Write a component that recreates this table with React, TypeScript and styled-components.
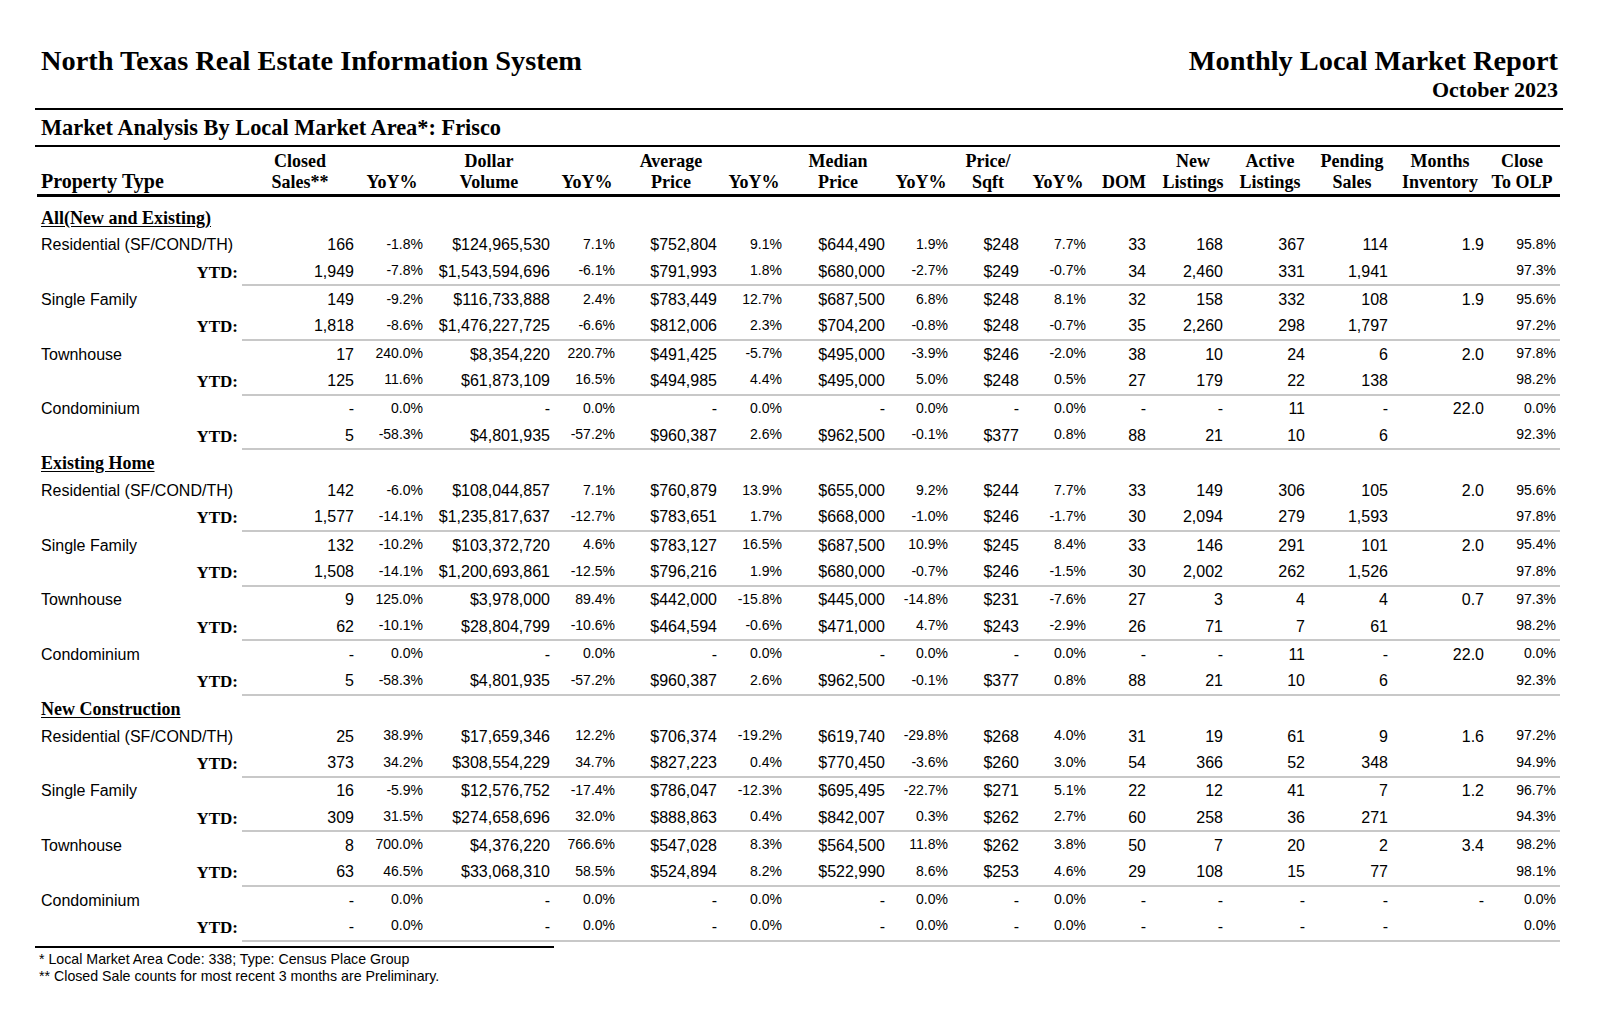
import React from 'react';
import styled, { createGlobalStyle } from 'styled-components';

const SERIF = `"Liberation Serif", "Times New Roman", serif`;
const SANS = `"Liberation Sans", Arial, sans-serif`;

const GlobalStyle = createGlobalStyle`
  html, body { margin: 0; padding: 0; background: #ffffff; }
  body { font-family: ${SANS}; color: #000; }
`;

type Col = { w: number; pad: number; small?: boolean };

const COLS: Col[] = [
  { w: 205, pad: 4 },
  { w: 116, pad: 4 },
  { w: 68, pad: 3, small: true },
  { w: 126, pad: 2 },
  { w: 70, pad: 7, small: true },
  { w: 98, pad: 3 },
  { w: 68, pad: 6, small: true },
  { w: 100, pad: 3 },
  { w: 66, pad: 6, small: true },
  { w: 68, pad: 3 },
  { w: 72, pad: 8, small: true },
  { w: 60, pad: 8 },
  { w: 78, pad: 9 },
  { w: 76, pad: 3 },
  { w: 88, pad: 8 },
  { w: 88, pad: 0 },
  { w: 76, pad: 4, small: true },
];

const TEMPLATE = COLS.map((c) => `${c.w}px`).join(' ');

const HEADERS: string[][] = [
  ['Property Type'],
  ['Closed', 'Sales**'],
  ['YoY%'],
  ['Dollar', 'Volume'],
  ['YoY%'],
  ['Average', 'Price'],
  ['YoY%'],
  ['Median', 'Price'],
  ['YoY%'],
  ['Price/', 'Sqft'],
  ['YoY%'],
  ['DOM'],
  ['New', 'Listings'],
  ['Active', 'Listings'],
  ['Pending', 'Sales'],
  ['Months', 'Inventory'],
  ['Close', 'To OLP'],
];

type Pair = { name: string; main: string[]; ytd: string[] };
type Section = { title: string; pairs: Pair[] };

const SECTIONS: Section[] = [
  {
    title: 'All(New and Existing)',
    pairs: [
      {
        name: 'Residential (SF/COND/TH)',
        main: ['166', '-1.8%', '$124,965,530', '7.1%', '$752,804', '9.1%', '$644,490', '1.9%', '$248', '7.7%', '33', '168', '367', '114', '1.9', '95.8%'],
        ytd: ['1,949', '-7.8%', '$1,543,594,696', '-6.1%', '$791,993', '1.8%', '$680,000', '-2.7%', '$249', '-0.7%', '34', '2,460', '331', '1,941', '', '97.3%'],
      },
      {
        name: 'Single Family',
        main: ['149', '-9.2%', '$116,733,888', '2.4%', '$783,449', '12.7%', '$687,500', '6.8%', '$248', '8.1%', '32', '158', '332', '108', '1.9', '95.6%'],
        ytd: ['1,818', '-8.6%', '$1,476,227,725', '-6.6%', '$812,006', '2.3%', '$704,200', '-0.8%', '$248', '-0.7%', '35', '2,260', '298', '1,797', '', '97.2%'],
      },
      {
        name: 'Townhouse',
        main: ['17', '240.0%', '$8,354,220', '220.7%', '$491,425', '-5.7%', '$495,000', '-3.9%', '$246', '-2.0%', '38', '10', '24', '6', '2.0', '97.8%'],
        ytd: ['125', '11.6%', '$61,873,109', '16.5%', '$494,985', '4.4%', '$495,000', '5.0%', '$248', '0.5%', '27', '179', '22', '138', '', '98.2%'],
      },
      {
        name: 'Condominium',
        main: ['-', '0.0%', '-', '0.0%', '-', '0.0%', '-', '0.0%', '-', '0.0%', '-', '-', '11', '-', '22.0', '0.0%'],
        ytd: ['5', '-58.3%', '$4,801,935', '-57.2%', '$960,387', '2.6%', '$962,500', '-0.1%', '$377', '0.8%', '88', '21', '10', '6', '', '92.3%'],
      },
    ],
  },
  {
    title: 'Existing Home',
    pairs: [
      {
        name: 'Residential (SF/COND/TH)',
        main: ['142', '-6.0%', '$108,044,857', '7.1%', '$760,879', '13.9%', '$655,000', '9.2%', '$244', '7.7%', '33', '149', '306', '105', '2.0', '95.6%'],
        ytd: ['1,577', '-14.1%', '$1,235,817,637', '-12.7%', '$783,651', '1.7%', '$668,000', '-1.0%', '$246', '-1.7%', '30', '2,094', '279', '1,593', '', '97.8%'],
      },
      {
        name: 'Single Family',
        main: ['132', '-10.2%', '$103,372,720', '4.6%', '$783,127', '16.5%', '$687,500', '10.9%', '$245', '8.4%', '33', '146', '291', '101', '2.0', '95.4%'],
        ytd: ['1,508', '-14.1%', '$1,200,693,861', '-12.5%', '$796,216', '1.9%', '$680,000', '-0.7%', '$246', '-1.5%', '30', '2,002', '262', '1,526', '', '97.8%'],
      },
      {
        name: 'Townhouse',
        main: ['9', '125.0%', '$3,978,000', '89.4%', '$442,000', '-15.8%', '$445,000', '-14.8%', '$231', '-7.6%', '27', '3', '4', '4', '0.7', '97.3%'],
        ytd: ['62', '-10.1%', '$28,804,799', '-10.6%', '$464,594', '-0.6%', '$471,000', '4.7%', '$243', '-2.9%', '26', '71', '7', '61', '', '98.2%'],
      },
      {
        name: 'Condominium',
        main: ['-', '0.0%', '-', '0.0%', '-', '0.0%', '-', '0.0%', '-', '0.0%', '-', '-', '11', '-', '22.0', '0.0%'],
        ytd: ['5', '-58.3%', '$4,801,935', '-57.2%', '$960,387', '2.6%', '$962,500', '-0.1%', '$377', '0.8%', '88', '21', '10', '6', '', '92.3%'],
      },
    ],
  },
  {
    title: 'New Construction',
    pairs: [
      {
        name: 'Residential (SF/COND/TH)',
        main: ['25', '38.9%', '$17,659,346', '12.2%', '$706,374', '-19.2%', '$619,740', '-29.8%', '$268', '4.0%', '31', '19', '61', '9', '1.6', '97.2%'],
        ytd: ['373', '34.2%', '$308,554,229', '34.7%', '$827,223', '0.4%', '$770,450', '-3.6%', '$260', '3.0%', '54', '366', '52', '348', '', '94.9%'],
      },
      {
        name: 'Single Family',
        main: ['16', '-5.9%', '$12,576,752', '-17.4%', '$786,047', '-12.3%', '$695,495', '-22.7%', '$271', '5.1%', '22', '12', '41', '7', '1.2', '96.7%'],
        ytd: ['309', '31.5%', '$274,658,696', '32.0%', '$888,863', '0.4%', '$842,007', '0.3%', '$262', '2.7%', '60', '258', '36', '271', '', '94.3%'],
      },
      {
        name: 'Townhouse',
        main: ['8', '700.0%', '$4,376,220', '766.6%', '$547,028', '8.3%', '$564,500', '11.8%', '$262', '3.8%', '50', '7', '20', '2', '3.4', '98.2%'],
        ytd: ['63', '46.5%', '$33,068,310', '58.5%', '$524,894', '8.2%', '$522,990', '8.6%', '$253', '4.6%', '29', '108', '15', '77', '', '98.1%'],
      },
      {
        name: 'Condominium',
        main: ['-', '0.0%', '-', '0.0%', '-', '0.0%', '-', '0.0%', '-', '0.0%', '-', '-', '-', '-', '-', '0.0%'],
        ytd: ['-', '0.0%', '-', '0.0%', '-', '0.0%', '-', '0.0%', '-', '0.0%', '-', '-', '-', '-', '', '0.0%'],
      },
    ],
  },
];

const Page = styled.div`
  width: 1528px;
  margin-left: 35px;
  padding-top: 45px;
`;

const TopBar = styled.header`
  display: flex;
  justify-content: space-between;
  align-items: flex-start;
  padding: 0 5px 5px 6px;
  border-bottom: 2px solid #000;
  font-family: ${SERIF};
  font-weight: bold;
`;

const Title = styled.h1`
  margin: 0;
  font-size: 28.35px;
  line-height: 32px;
  font-weight: bold;
  white-space: nowrap;
`;

const RightTitles = styled.div`
  display: flex;
  flex-direction: column;
  align-items: flex-end;
`;

const DateLine = styled.div`
  font-size: 22px;
  line-height: 26px;
`;

const SubTitle = styled.h2`
  margin: 0;
  width: 1525px;
  height: 37px;
  display: flex;
  align-items: center;
  padding-left: 6px;
  box-sizing: border-box;
  border-bottom: 2px solid #000;
  font-family: ${SERIF};
  font-size: 22.35px;
  font-weight: bold;
  white-space: nowrap;
`;

const Table = styled.section`
  margin-left: 2px;
  width: 1523px;
`;

const HeadRow = styled.div`
  display: grid;
  grid-template-columns: ${TEMPLATE};
  align-items: end;
  padding: 4px 0 2px;
  border-bottom: 3px solid #000;
  font-family: ${SERIF};
  font-weight: bold;
`;

const HeadLabel = styled.div`
  font-size: 20px;
  line-height: 22px;
  padding-left: 4px;
  white-space: nowrap;
`;

const HeadCell = styled.div`
  font-size: 18px;
  line-height: 20.5px;
  text-align: center;
  white-space: nowrap;
`;

const Body = styled.div`
  padding-top: 7.5px;
`;

const SectionHeading = styled.div`
  height: 27.3px;
  display: flex;
  align-items: center;
  padding-left: 4px;
  font-family: ${SERIF};
  font-size: 18px;
  font-weight: bold;
  text-decoration: underline;
  text-underline-offset: 2px;
`;

const Row = styled.div`
  display: grid;
  grid-template-columns: ${TEMPLATE};
  height: 27.3px;
`;

const Label = styled.div<{ $ytd?: boolean }>`
  display: flex;
  align-items: center;
  justify-content: ${(p) => (p.$ytd ? 'flex-end' : 'flex-start')};
  padding: ${(p) => (p.$ytd ? '0 4px 0 0' : '0 0 0 4px')};
  font-family: ${(p) => (p.$ytd ? SERIF : SANS)};
  font-weight: ${(p) => (p.$ytd ? 'bold' : 'normal')};
  font-size: ${(p) => (p.$ytd ? '17px' : '16px')};
  white-space: nowrap;
`;

const Cell = styled.div<{ $pad: number; $small?: boolean; $rule?: boolean }>`
  display: flex;
  align-items: center;
  justify-content: flex-end;
  box-sizing: border-box;
  padding-right: ${(p) => p.$pad}px;
  padding-bottom: ${(p) => (p.$small ? 3 : 0)}px;
  font-size: ${(p) => (p.$small ? '14px' : '16px')};
  white-space: nowrap;
  border-bottom: ${(p) => (p.$rule ? '2px solid #c8c8c8' : 'none')};
`;

const Footer = styled.footer`
  padding-top: 4.5px;
`;

const FootRule = styled.div`
  width: 519px;
  height: 2px;
  background: #000;
  margin-bottom: 3px;
`;

const Note = styled.div`
  padding-left: 4px;
  font-size: 14.2px;
  line-height: 16.5px;
  white-space: nowrap;
`;

const DataRow: React.FC<{ label: string; values: string[]; ytd?: boolean }> = ({ label, values, ytd }) => (
  <Row>
    <Label $ytd={ytd}>{label}</Label>
    {values.map((v, i) => {
      const col = COLS[i + 1];
      return (
        <Cell key={i} $pad={col.pad} $small={col.small} $rule={ytd}>
          {v}
        </Cell>
      );
    })}
  </Row>
);

export default function App() {
  return (
    <>
      <GlobalStyle />
      <Page>
        <TopBar>
          <Title>North Texas Real Estate Information System</Title>
          <RightTitles>
            <Title>Monthly Local Market Report</Title>
            <DateLine>October 2023</DateLine>
          </RightTitles>
        </TopBar>
        <SubTitle>Market Analysis By Local Market Area*: Frisco</SubTitle>
        <Table>
          <HeadRow>
            {HEADERS.map((lines, i) =>
              i === 0 ? (
                <HeadLabel key={i}>{lines[0]}</HeadLabel>
              ) : (
                <HeadCell key={i}>
                  {lines.map((l, j) => (
                    <div key={j}>{l}</div>
                  ))}
                </HeadCell>
              )
            )}
          </HeadRow>
          <Body>
            {SECTIONS.map((s) => (
              <div key={s.title}>
                <SectionHeading>{s.title}</SectionHeading>
                {s.pairs.map((p) => (
                  <React.Fragment key={p.name}>
                    <DataRow label={p.name} values={p.main} />
                    <DataRow label="YTD:" values={p.ytd} ytd />
                  </React.Fragment>
                ))}
              </div>
            ))}
          </Body>
        </Table>
        <Footer>
          <FootRule />
          <Note>* Local Market Area Code: 338; Type: Census Place Group</Note>
          <Note>** Closed Sale counts for most recent 3 months are Preliminary.</Note>
        </Footer>
      </Page>
    </>
  );
}
